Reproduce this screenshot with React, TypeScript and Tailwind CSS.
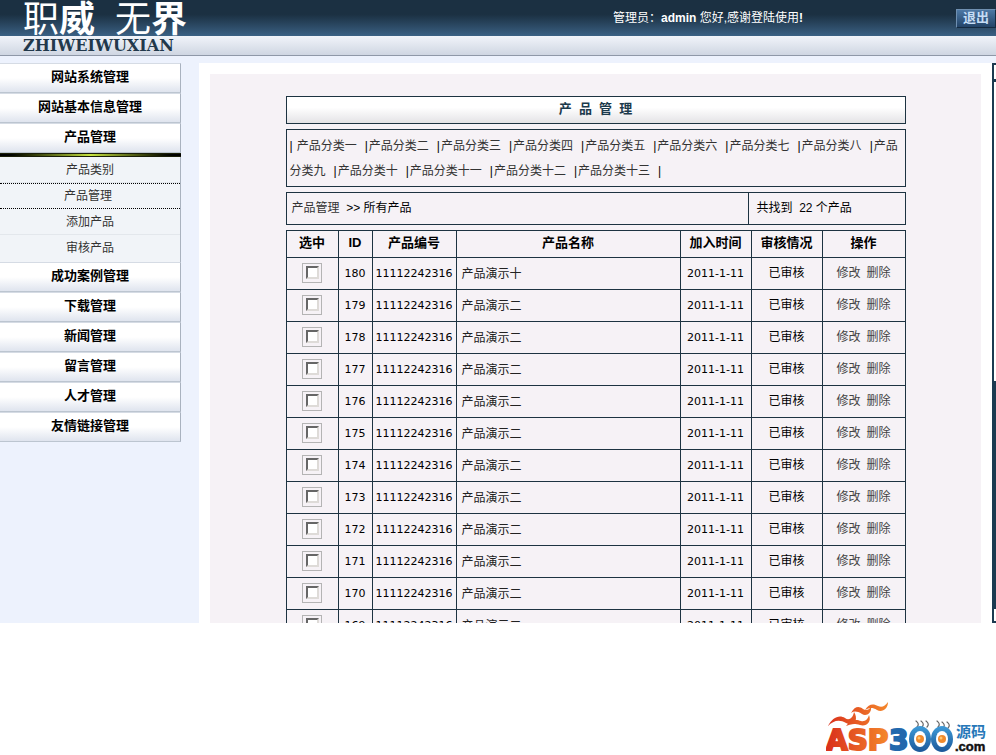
import React from 'react'

const menuTop: string[] = ["网站系统管理", "网站基本信息管理", "产品管理"]
const menuSub: string[] = ["产品类别", "产品管理", "添加产品", "审核产品"]
const menuBottom: string[] = ["成功案例管理", "下载管理", "新闻管理", "留言管理", "人才管理", "友情链接管理"]

const categories: string[] = ["产品分类一", "产品分类二", "产品分类三", "产品分类四", "产品分类五", "产品分类六", "产品分类七",
    "产品分类八", "产品分类九", "产品分类十", "产品分类十一", "产品分类十二", "产品分类十三"]

const products = [180, 179, 178, 177, 176, 175, 174, 173, 172, 171, 170, 169].map((id) => ({
    id,
    code: "11112242316",
    name: id === 180 ? "产品演示十" : "产品演示二",
    date: "2011-1-11",
}))

const MenuItem = ({ text }: { text: string }) => (
    <a href="#" className="flex h-[30px] items-center justify-center border-t border-r border-b border-t-[#d5dbe4] border-r-[#a9b2bf] border-b-[#bcc5d0] bg-linear-to-b from-white from-50% to-[#dfe4ee] pb-0.5 text-[13px] font-bold text-black">{text}</a>
)

const Header = () => (
    <header>
        <div className="flex h-9 items-center bg-linear-to-b from-[#1b3042] from-40% to-[#3b6184]">
            <div className="flex flex-1 items-center pt-1 pl-[23px] text-4xl leading-8 text-white">
                <span>职</span><span className="font-bold">威</span>
                <span className="ml-5">无</span><span className="font-bold">界</span>
            </div>
            <p className="w-[343px] text-xs text-white">管理员：<b>admin</b> 您好,感谢登陆使用<b>!</b></p>
            <button className="h-[19px] w-10 border border-[#142a40] border-t-[#6f8fb0] border-l-[#6f8fb0] bg-linear-to-b from-[#4d78a4] to-[#234468] text-[13px] leading-4 font-bold text-[#c5ddf5]">退出</button>
        </div>
        <div className="h-5 border-b border-[#8f98a8] bg-linear-to-b from-[#f1f4fa] to-[#cfd6e2] pl-[23px]">
            <span className="block font-['DejaVu_Serif'] text-base leading-5 font-bold text-[#22384b]">ZHIWEIWUXIAN</span>
        </div>
    </header>
)

const Sidebar = () => (
    <nav className="w-[181px] shrink-0">
        {menuTop.map((t) => <MenuItem key={t} text={t} />)}
        <div className="h-1 border-y border-[#1a1e08] bg-linear-to-r from-black via-[#c9e640] to-black"></div>
        <div className="border-r border-[#a9b2bf] bg-[#f1f4f8] pb-px text-center text-xs text-[#333]">
            {menuSub.map((t, i) => (
                <a key={t} href="#" className={i === 1 ? "block h-[26px] border-y border-dotted border-black pr-1 leading-6" : "block h-[26px] border-b border-[#e3e7ec] leading-[26px] last:border-transparent"}>{t}</a>
            ))}
        </div>
        {menuBottom.map((t) => <MenuItem key={t} text={t} />)}
    </nav>
)

const cell = "border border-[#1d3341]"

const ProductTable = () => (
    <table className="w-full table-fixed border-collapse text-center text-xs text-black">
        <colgroup>
            <col className="w-[52px]" /><col className="w-[34px]" /><col className="w-[84px]" /><col />
            <col className="w-[71px]" /><col className="w-[71px]" /><col className="w-[83px]" />
        </colgroup>
        <thead>
            <tr className="h-[27px] text-[13px] leading-4">
                {["选中", "ID", "产品编号", "产品名称", "加入时间", "审核情况", "操作"].map((h) => (
                    <th key={h} className={`${cell} p-0 pb-0.5`}>{h}</th>
                ))}
            </tr>
        </thead>
        <tbody>
            {products.map((p) => (
                <tr key={p.id} className="h-8 leading-4">
                    <td className={cell}>
                        <label className="mx-auto mb-0.5 flex size-5 items-center justify-center border border-[#b4b4b4]">
                            <input type="checkbox" aria-label={`选中 ${p.id}`} className="size-[13px] appearance-none border-2 border-[#dedbd8] border-t-[#666] border-l-[#666] bg-white" />
                        </label>
                    </td>
                    <td className={`${cell} font-['DejaVu_Sans'] text-[11px]`}>{p.id}</td>
                    <td className={`${cell} font-['DejaVu_Sans'] text-[11px]`}>{p.code}</td>
                    <td className={`${cell} pl-[5px] text-left text-[#222]`}>{p.name}</td>
                    <td className={`${cell} font-['DejaVu_Sans'] text-[11px]`}>{p.date}</td>
                    <td className={`${cell} pb-0.5`}>已审核</td>
                    <td className={`${cell} pb-0.5 text-[#444]`}>
                        <a href="#" className="mr-[6px]">修改</a><a href="#">删除</a>
                    </td>
                </tr>
            ))}
        </tbody>
    </table>
)

// left edge of the scroll bar: arrow box, track, thumb, arrow box
const ScrollEdge = () => (
    <div className="flex w-1 shrink-0 flex-col bg-[#1b3a50]">
        <div className="mt-0.5 ml-0.5 h-[14px] bg-white"></div>
        <div className="mt-[3px] ml-0.5 h-[299px] bg-white"></div>
        <div className="flex-1"></div>
        <div className="mb-0.5 ml-0.5 h-3 bg-white"></div>
    </div>
)

const Logo = () => (
    <svg width="166" height="54" viewBox="0 0 166 54" role="img" aria-label="ASP300源码.com">
        <defs>
            <linearGradient id="asp" gradientUnits="userSpaceOnUse" x1="0" y1="0" x2="64" y2="0">
                <stop offset="0" stopColor="#d92f1c" />
                <stop offset="1" stopColor="#f58a2c" />
            </linearGradient>
            <linearGradient id="blue" x1="0" y1="0" x2="0" y2="1">
                <stop offset="0" stopColor="#3f9bd8" />
                <stop offset="1" stopColor="#1b5799" />
            </linearGradient>
        </defs>
        <g fill="url(#asp)">
            <path d="M2 25C6 17 13 13 19 17C23 20 27 17 28 11C33 19 28 26 20 22C13 18 7 20 2 25Z" />
            <path d="M25 12C29 5 33 5 37 8C40 10 43 9 45 6C46 12 40 16 36 13C31 10 28 10 25 12Z" />
            <path d="M39 9C43 2 48 3 52 5C56 7 59 5 62 1C62 8 56 12 51 9C46 6 43 7 39 9Z" />
            <path d="M20 25C27 17 31 19 35 20C39 21 42 18 43 14C46 21 40 26 34 24C28 22 25 23 20 25Z" />
        </g>
        <g fontFamily="DejaVu Sans" fontWeight="bold">
            <text x="0" y="49" fontSize="28" fill="url(#asp)" stroke="url(#asp)" strokeWidth="2">ASP</text>
            <text x="63" y="49" fontSize="28" fill="#2268ad" stroke="#2268ad" strokeWidth="2">3</text>
            <text x="129" y="50" fontSize="13" fontFamily="Liberation Sans" fill="#111" stroke="#111" strokeWidth="0.5">.com</text>
            <text x="130" y="36" fontSize="15" fontFamily="Noto Sans CJK SC, sans-serif" fill="#2677b8">源码</text>
        </g>
        <g fill="none" stroke="#666" strokeWidth="1.2" strokeLinecap="round">
            <path d="M90 20q4 3 1 6M95 20q4 3 1 6M100 20q4 3 1 6" />
            <path d="M111 20q4 3 1 6M116 21q4 3 1 6M121 21q4 3 1 6" />
        </g>
        {[94, 116].map((x) => (
            <g key={x}>
                <ellipse cx={x} cy="38" rx="11" ry="13" fill="url(#blue)" />
                <ellipse cx={x} cy="38" rx="6" ry="8" fill="#fff" />
                <circle cx={x} cy="38" r="4" fill="#f08a2c" />
                <circle cx={x - 1} cy="37" r="1.5" fill="#ffc56e" />
            </g>
        ))}
    </svg>
)

const App = () => {
    return (
        <main className="min-h-screen bg-white font-['Liberation_Sans','Noto_Sans_CJK_SC',sans-serif]">
            {/* the framed page: everything past its height is cut off */}
            <div className="flex h-[623px] flex-col overflow-hidden bg-[#edf2fd]">
                <Header />
                <div className="mt-[7px] flex min-h-0 flex-1">
                    <Sidebar />
                    <div className="ml-[18px] min-w-0 flex-1 bg-white px-[11px] pt-[11px]">
                        <section className="h-full bg-[#f6f2f6] pt-[22px]">
                            <div className="mx-auto flex w-[620px] max-w-full flex-col gap-[5px] text-xs text-black">
                                <h1 className="h-7 border border-[#1d3341] bg-linear-to-b from-white from-40% to-[#e4e3e6] text-center text-[13px] leading-6 font-bold text-[#1c3a4c]">产&nbsp; 品&nbsp; 管&nbsp; 理</h1>
                                <div className="border border-[#1d3341] px-[3px] pt-1 pb-0.5 leading-[25px]">
                                    <span className="mr-1">|</span>
                                    {categories.map((c) => (
                                        <React.Fragment key={c}><a href="#" className="text-[#333]">{c}</a><span className="mr-px ml-2">|</span></React.Fragment>
                                    ))}
                                </div>
                                <div className="flex h-[33px] border border-[#1d3341] leading-[30px]">
                                    <div className="flex-1 border-r border-[#1d3341] pl-[5px]"><a href="#" className="text-[#333]">产品管理</a>&nbsp; &gt;&gt; 所有产品</div>
                                    <div className="w-[156px] pl-2">共找到&nbsp; 22 个产品</div>
                                </div>
                                <ProductTable />
                            </div>
                        </section>
                    </div>
                    <ScrollEdge />
                </div>
            </div>
            <footer className="flex justify-end pt-[78px] pr-1">
                <Logo />
            </footer>
        </main>
    )
}

export default App
